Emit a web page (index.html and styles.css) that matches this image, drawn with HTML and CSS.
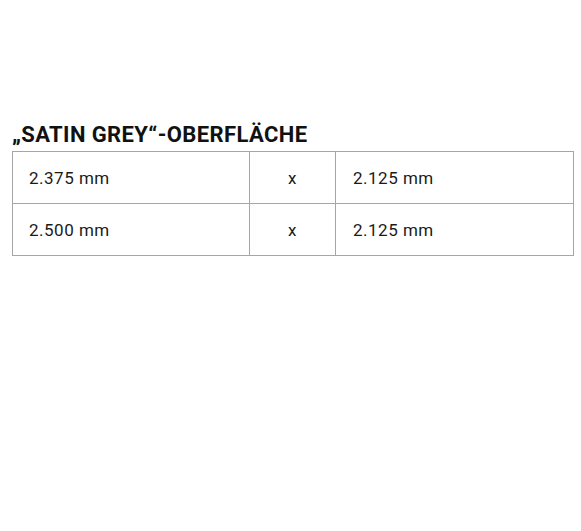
FILE: index.html
```html
<!DOCTYPE html>
<html lang="de">
<head>
<meta charset="utf-8">
<link rel="stylesheet" href="styles.css">
</head>
<body>
<div class="page">
  <h2 class="title">„SATIN GREY“-OBERFLÄCHE</h2>
  <table class="sizes">
    <tr>
      <td class="c1">2.375 mm</td>
      <td class="c2">x</td>
      <td class="c3">2.125 mm</td>
    </tr>
    <tr>
      <td class="c1">2.500 mm</td>
      <td class="c2">x</td>
      <td class="c3">2.125 mm</td>
    </tr>
  </table>
</div>
</body>
</html>
```
FILE: styles.css
```css
html, body {
  margin: 0;
  padding: 0;
  background: #fff;
}
body {
  font-family: Roboto, "Liberation Sans", sans-serif;
  color: #1a1a1a;
}
.page {
  padding: 122px 7px 0 12px;
}
.title {
  margin: 0 0 4px 0;
  font-size: 22px;
  font-weight: 700;
  line-height: 25px;
  letter-spacing: 0.4px;
  color: #111;
}
.sizes {
  width: 562px;
  border-collapse: collapse;
  font-size: 17px;
  letter-spacing: 0.5px;
}
.sizes td {
  border: 1px solid #a6a6a6;
  height: 51px;
  padding: 0;
  vertical-align: middle;
}
.c1 {
  width: 220px;
  padding-left: 16px !important;
}
.c2 {
  width: 85px;
  text-align: center;
}
.c3 {
  padding-left: 17px !important;
}
```
